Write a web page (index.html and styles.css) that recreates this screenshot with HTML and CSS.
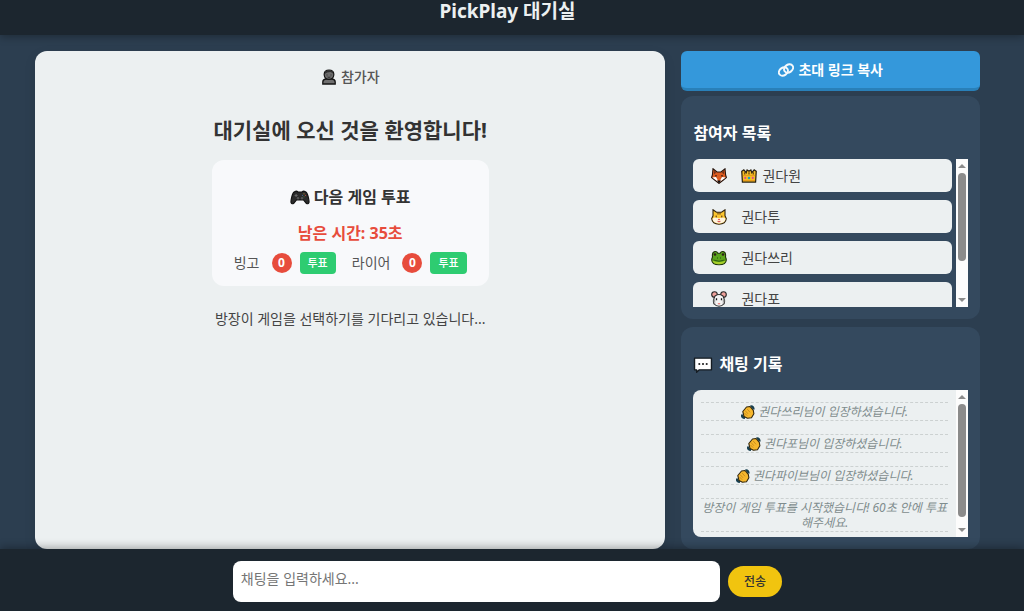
FILE: index.html
```html
<!DOCTYPE html>
<html lang="ko">
<head>
<meta charset="utf-8">
<meta name="viewport" content="width=device-width, initial-scale=1">
<title>PickPlay 대기실</title>
<link rel="stylesheet" href="styles.css">
</head>
<body>
<svg class="sprite" aria-hidden="true">
  <symbol id="person" viewBox="0 0 16 16">
    <path d="M1.800 15v-2q0-2.500 3-3h6.400q3 .5 3 3v2z" fill="#707070" stroke="#151515" stroke-width="1.300"/>
    <path d="M3.200 6V5Q3.400 1 8 1t4.800 4v1Q12.400 10.300 8 10.300T3.200 6z" fill="#6d6d6d" stroke="#151515" stroke-width="1.200"/>
    <path d="M3.700 5Q4 1.300 8 1.300T12.300 5q-1-1.500-3-2-3.500 0-5.600 2z" fill="#303030"/>
    <path d="M6 5.500v1M10 5.500v1M6.500 8q1.500.8 3 0" stroke="#222" fill="none" stroke-width=".8"/>
  </symbol>
  <symbol id="gamepad" viewBox="0 0 20 16">
    <path d="M5 2.500Q6.500 1.500 8 3h4q1.500-1.500 3-.5 2 .5 3 4.500 1.300 5 1 6.500-.8 2-2.800.8L13.500 11h-7l-2.700 3.300q-2 1.200-2.800-.8Q.7 12 2 7q1-4 3-4.500z" fill="#2b2b2b" stroke="#111" stroke-width="1.100"/>
    <path d="M4.600 6.500h3M6.100 5v3" stroke="#666" stroke-width="1.100"/>
    <circle cx="8" cy="9.300" r="1.200" fill="#555"/><circle cx="12" cy="9.300" r="1.200" fill="#555"/>
    <circle cx="14" cy="4.800" r=".6" fill="#b08a30"/><circle cx="15.500" cy="6.300" r=".6" fill="#c14836"/><circle cx="14" cy="7.800" r=".6" fill="#4c7b3f"/><circle cx="12.500" cy="6.300" r=".6" fill="#476b95"/>
  </symbol>
  <symbol id="link" viewBox="0 0 16 14">
    <g fill="none" stroke="#f4f8fb" stroke-width="2">
      <ellipse cx="10.600" cy="5.500" rx="4.800" ry="3.800" transform="rotate(-35 10.600 5.500)"/>
      <ellipse cx="5.400" cy="8.500" rx="4.800" ry="3.800" transform="rotate(-35 5.400 8.500)"/>
    </g>
  </symbol>
  <symbol id="fox" viewBox="0 0 16 16">
    <path d="M2 .8L6 4h4L14 .8l.6 6 .8 2.700-3.700 3L8 15.400l-3.700-2.900-3.700-3L1.400 6.800z" fill="#dc5b20" stroke="#26150e" stroke-width="1.100"/>
    <path d="M1.200 9.500L5 9l3 5.500L4.700 12zM14.800 9.500L11 9l-3 5.500 3.300-2.500z" fill="#fff"/>
    <path d="M3 2.800l2 2-1.700 1.500zM13 2.800l-2 2 1.700 1.500z" fill="#5d2b19"/>
    <path d="M5 7v1.500M11 7v1.500M7 13h2l-1 1.400z" fill="#111" stroke="#111" stroke-width="1.100"/>
  </symbol>
  <symbol id="crown" viewBox="0 0 17 15">
    <path d="M1.500 14L.8 2.500 3 1l2.500 3L6.500 1l2 1.500 2-1.500 1 3L14 1l2.200 1.500-.7 11.500z" fill="#f4bd25" stroke="#292011" stroke-width="1.300"/>
    <path d="M4 6V3.500M8.500 6V3.500M13 6V3.500" stroke="#4a2f0c" stroke-width="1.100"/>
    <path d="M2 7h13M2 12.300h13" stroke="#e79b18" stroke-width="1"/>
    <circle cx="4.500" cy="9.500" r="1.100" fill="#df478d"/><circle cx="8.500" cy="9.700" r="1.300" fill="#18a6bb"/><circle cx="12.500" cy="9.500" r="1.100" fill="#df478d"/>
  </symbol>
  <symbol id="cat" viewBox="0 0 16 16">
    <path d="M2 .8l3.500 2.500h5L14 .8v6l1.300 2.800q-.7 5.400-7.300 5.600Q1.400 15 .7 9.600L2 6.800z" fill="#fbc52e" stroke="#30230f" stroke-width="1.100"/>
    <path d="M1.400 9.800Q4 7.500 8 9.500q4-2 6.600.3-.6 4.500-6.600 4.700-6-.2-6.600-4.700z" fill="#fff4dc"/>
    <path d="M5.200 6.600v1.800M10.800 6.600v1.800M7 3.500v2M9 3.500v2" stroke="#4b2a12" stroke-width="1"/>
    <path d="M6.800 10h2.400L8 11.400z" fill="#d72f37"/><path d="M6.500 12.300q1.500 1.300 3 0" fill="#d72f37" stroke="#d72f37" stroke-width=".7"/>
  </symbol>
  <symbol id="frog" viewBox="0 0 16 16">
    <path d="M1.500 7Q.8 2 4 1.500 6 1.300 6.800 3.200h2.400Q10 1.300 12 1.500q3.200.5 2.500 5.500.8 1.500.8 3-.3 4.800-7.300 4.800T.7 10q0-1.500.8-3z" fill="#5ba51d" stroke="#1d3009" stroke-width="1.100"/>
    <path d="M1.300 10.500q6.700 3 13.400 0-.8 3.700-6.700 3.700t-6.700-3.700z" fill="#a8cf29"/>
    <circle cx="4" cy="4.500" r="1.300" fill="#302119"/><circle cx="12" cy="4.500" r="1.300" fill="#302119"/>
    <path d="M6.500 7.500v1M9.500 7.500v1" stroke="#22500e" stroke-width="1"/>
    <path d="M2.500 10q5.500 2.500 11 0" stroke="#315e0c" fill="none"/>
  </symbol>
  <symbol id="mouse" viewBox="0 0 16 16">
    <circle cx="3.500" cy="3.500" r="2.800" fill="#efa09a" stroke="#272727" stroke-width="1.100"/>
    <circle cx="12.500" cy="3.500" r="2.800" fill="#efa09a" stroke="#272727" stroke-width="1.100"/>
    <path d="M4 5q4-3 8 0 2 3 1.300 7.500Q11 15.200 8 15.200t-5.300-2.700Q2 8 4 5z" fill="#f4f4f4" stroke="#272727" stroke-width="1.100"/>
    <path d="M5.500 7.200v2M10.500 7.200v2" stroke="#191919" stroke-width="1.300"/><path d="M6.500 12h3L8 14z" fill="#e88581"/>
    <path d="M1.500 10h3M11.500 10h3M2 13l2.500-1M14 13l-2.500-1" stroke="#777" stroke-width=".6"/>
  </symbol>
  <symbol id="bubble" viewBox="0 0 18 17">
    <path d="M1 3h16v11H5.500L3 16.300V14H1z" fill="#fff" stroke="#151c22" stroke-width="1.300" stroke-linejoin="round"/>
    <circle cx="5.500" cy="8.500" r="1" fill="#222"/><circle cx="9" cy="8.500" r="1" fill="#222"/><circle cx="12.500" cy="8.500" r="1" fill="#222"/>
  </symbol>
  <symbol id="wave" viewBox="0 0 14 14">
    <path d="M9.500 1.500q3-.5 3 3M1 9.500q-.3 3 3 3.300" fill="none" stroke="#173f50" stroke-width="2.400"/>
    <path d="M1.800 6.500L5.500 2 9 1.500l3.300 3.800.6 3.500-2.400 4-4 .5L3 11.500z" fill="#f6b72d" stroke="#33280f" stroke-width="1.100" stroke-linejoin="round"/>
    <path d="M4 5.500l3 3.300M6 3.800l3 3.500M3.500 8l2.700 2.700" stroke="#b97c16" stroke-width=".7"/>
  </symbol>
</svg>

<header class="header"><h1 class="header-title">PickPlay 대기실</h1></header>

<main class="layout">
  <section class="lobby">
    <p class="role"><svg class="icon icon-md" aria-hidden="true"><use href="#person"/></svg>참가자</p>
    <h2 class="welcome">대기실에 오신 것을 환영합니다!</h2>
    <div class="vote">
      <h3 class="vote-title"><svg class="icon icon-lg" aria-hidden="true"><use href="#gamepad"/></svg>다음 게임 투표</h3>
      <p class="timer">남은 시간: 35초</p>
      <div class="games">
        <div class="game"><span class="game-name">빙고</span><span class="count">0</span><button class="vote-button" type="button">투표</button></div>
        <div class="game"><span class="game-name">라이어</span><span class="count">0</span><button class="vote-button" type="button">투표</button></div>
      </div>
    </div>
    <p class="waiting">방장이 게임을 선택하기를 기다리고 있습니다...</p>
  </section>

  <aside class="sidebar">
    <button class="invite" type="button"><svg class="icon icon-md" aria-hidden="true"><use href="#link"/></svg>초대 링크 복사</button>
    <section class="panel">
      <h2 class="panel-title">참여자 목록</h2>
      <div class="scroll-area">
        <ul class="players">
          <li class="player"><svg class="icon icon-md" aria-hidden="true"><use href="#fox"/></svg><span class="player-name"><svg class="icon icon-md" aria-hidden="true"><use href="#crown"/></svg>권다원</span></li>
          <li class="player"><svg class="icon icon-md" aria-hidden="true"><use href="#cat"/></svg><span class="player-name">권다투</span></li>
          <li class="player"><svg class="icon icon-md" aria-hidden="true"><use href="#frog"/></svg><span class="player-name">권다쓰리</span></li>
          <li class="player"><svg class="icon icon-md" aria-hidden="true"><use href="#mouse"/></svg><span class="player-name">권다포</span></li>
        </ul>
        <div class="scrollbar" aria-hidden="true"><span class="arrow arrow-up"></span><span class="track"><span class="thumb thumb-players"></span></span><span class="arrow arrow-down"></span></div>
      </div>
    </section>
    <section class="panel">
      <h2 class="panel-title"><svg class="icon icon-lg" aria-hidden="true"><use href="#bubble"/></svg>채팅 기록</h2>
      <div class="scroll-area chat">
        <div class="messages">
          <p class="message"><svg class="icon icon-sm" aria-hidden="true"><use href="#wave"/></svg>권다쓰리님이 입장하셨습니다.</p>
          <p class="message"><svg class="icon icon-sm" aria-hidden="true"><use href="#wave"/></svg>권다포님이 입장하셨습니다.</p>
          <p class="message"><svg class="icon icon-sm" aria-hidden="true"><use href="#wave"/></svg>권다파이브님이 입장하셨습니다.</p>
          <p class="message">방장이 게임 투표를 시작했습니다! 60초 안에 투표해주세요.</p>
        </div>
        <div class="scrollbar" aria-hidden="true"><span class="arrow arrow-up"></span><span class="track"><span class="thumb thumb-chat"></span></span><span class="arrow arrow-down"></span></div>
      </div>
    </section>
  </aside>
</main>

<form class="composer">
  <textarea class="chat-input" aria-label="채팅" placeholder="채팅을 입력하세요..."></textarea>
  <button class="send" type="button">전송</button>
</form>
</body>
</html>
```

FILE: styles.css
```css
* {
  box-sizing: border-box;
}

body {
  margin: 0;
  height: 100vh;
  display: flex;
  flex-direction: column;
  overflow: hidden;
  background: #2c3e50;
  color: #333;
  font-family: "Noto Sans", "Noto Sans CJK KR", sans-serif;
  font-size: 14px;
  line-height: 20px;
}

h1, h2, h3, p, ul {
  margin: 0;
  padding: 0;
}

button, textarea {
  font-family: inherit;
  border: 0;
}

button {
  cursor: pointer;
}

.sprite {
  position: absolute;
  width: 0;
  height: 0;
}

.icon {
  flex: none;
  width: 16px;
  height: 16px;
}

.icon-sm {
  width: 14px;
  height: 14px;
  margin-right: 3px;
  vertical-align: -3px;
}

.icon-lg {
  width: 20px;
  height: 18px;
}

.header {
  display: flex;
  justify-content: center;
  padding: 0 9px 13px 0;
  background: #1c262f;
  box-shadow: 0 2px 8px rgba(0, 0, 0, 0.3);
}

.header-title {
  color: #ecf0f1;
  font-size: 19px;
  line-height: 22px;
}

.layout {
  flex: 1;
  min-height: 0;
  display: grid;
  grid-template-columns: 19fr 9fr;
  grid-template-rows: minmax(0, 1fr);
  gap: 16px;
  padding: 16px 44px 0 35px;
}

.lobby {
  display: flex;
  flex-direction: column;
  align-items: center;
  padding: 16px;
  border-radius: 12px;
  background: #ecf0f1;
  box-shadow: 0 4px 12px rgba(0, 0, 0, 0.1);
}

.role {
  display: flex;
  align-items: center;
  gap: 4px;
  margin-bottom: 27px;
  color: #555;
  font-weight: 500;
}

.welcome {
  margin-bottom: 14px;
  font-size: 21px;
  line-height: 32px;
}

.vote {
  display: flex;
  flex-direction: column;
  align-items: center;
  margin-bottom: 23px;
  padding: 25px 22px 12px;
  border-radius: 12px;
  background: #f8f9fb;
}

.vote-title {
  display: flex;
  align-items: center;
  gap: 4px;
  margin-bottom: 12px;
  font-size: 16px;
  line-height: 24px;
}

.timer {
  margin-bottom: 7px;
  color: #e74c3c;
  font-size: 16px;
  font-weight: 700;
  line-height: 24px;
}

.games {
  display: flex;
  gap: 16px;
}

.game {
  display: flex;
  align-items: center;
  color: #555;
}

.count {
  width: 20px;
  margin: 0 8px 0 12px;
  border-radius: 10px;
  background: #e74c3c;
  color: #fff;
  font-size: 12px;
  font-weight: 700;
  text-align: center;
}

.vote-button {
  padding: 3px 8px;
  border-radius: 4px;
  background: #2ecc71;
  color: #fff;
  font-size: 11px;
  font-weight: 500;
  line-height: 16px;
}

.waiting {
  color: #444;
}

.sidebar {
  min-width: 0;
  display: flex;
  flex-direction: column;
  gap: 8px;
}

.invite {
  display: flex;
  align-items: center;
  justify-content: center;
  gap: 4px;
  margin-bottom: -3px;
  padding: 8px;
  border-bottom: 3px solid #2980b9;
  border-radius: 6px;
  background: #3498db;
  color: #fff;
  font-size: 14px;
  font-weight: 600;
  line-height: 21px;
}

.panel {
  flex: 1;
  min-height: 0;
  display: flex;
  flex-direction: column;
  padding: 25px 12px 12px;
  border-radius: 12px;
  background: #34495e;
}

.panel-title {
  display: flex;
  align-items: center;
  gap: 6px;
  margin-bottom: 14px;
  color: #fff;
  font-size: 16px;
  line-height: 24px;
}

.scroll-area {
  flex: 1;
  min-height: 0;
  display: flex;
}

.players {
  flex: 1;
  min-width: 0;
  display: flex;
  flex-direction: column;
  gap: 8px;
  margin-right: 4px;
  overflow: hidden;
  list-style: none;
}

.player {
  flex: none;
  display: flex;
  align-items: center;
  gap: 14px;
  padding: 7px 18px;
  border-radius: 6px;
  background: #ecf0f1;
  color: #444;
  line-height: 19px;
}

.player-name {
  display: flex;
  align-items: center;
  gap: 5px;
}

.scrollbar {
  flex: none;
  width: 12px;
  display: flex;
  flex-direction: column;
  align-items: center;
  background: #fcfcfc;
}

.arrow {
  margin: 5px 0;
  border: 4px solid transparent;
}

.arrow-up {
  border-top: 0;
  border-bottom-color: #8b8b8b;
}

.arrow-down {
  border-bottom: 0;
  border-top-color: #8b8b8b;
}

.track {
  flex: 1;
  width: 8px;
}

.thumb {
  display: block;
  border-radius: 4px;
  background: #8b8b8b;
}

.thumb-players {
  height: 74%;
}

.thumb-chat {
  height: 95%;
}

.chat {
  overflow: hidden;
  border-radius: 8px 0 0 8px;
  background: #ecf0f1;
}

.messages {
  flex: 1;
  min-width: 0;
  display: flex;
  flex-direction: column;
  gap: 13px;
  padding: 12px 8px 0;
  overflow: hidden;
}

.message {
  flex: none;
  padding: 1px 0;
  border-top: 1px dashed #ccd1d1;
  border-bottom: 1px dashed #ccd1d1;
  color: #7f8c8d;
  font-size: 12px;
  font-style: italic;
  line-height: 15px;
  text-align: center;
}

.composer {
  position: relative;
  display: flex;
  align-items: center;
  justify-content: center;
  gap: 8px;
  padding: 12px 9px 9px 0;
  background: #1c262f;
  box-shadow: 0 -2px 8px rgba(0, 0, 0, 0.3);
}

.chat-input {
  width: 48%;
  height: 41px;
  padding: 8px;
  border-radius: 8px;
  background: #fff;
  color: #333;
  font-size: 14px;
  line-height: 19px;
  resize: none;
}

.chat-input::placeholder {
  color: #757575;
}

.send {
  padding: 7px 16px;
  border-radius: 16px;
  background: #f1c40f;
  color: #333;
  font-size: 12px;
  font-weight: 500;
  line-height: 17px;
}
```
